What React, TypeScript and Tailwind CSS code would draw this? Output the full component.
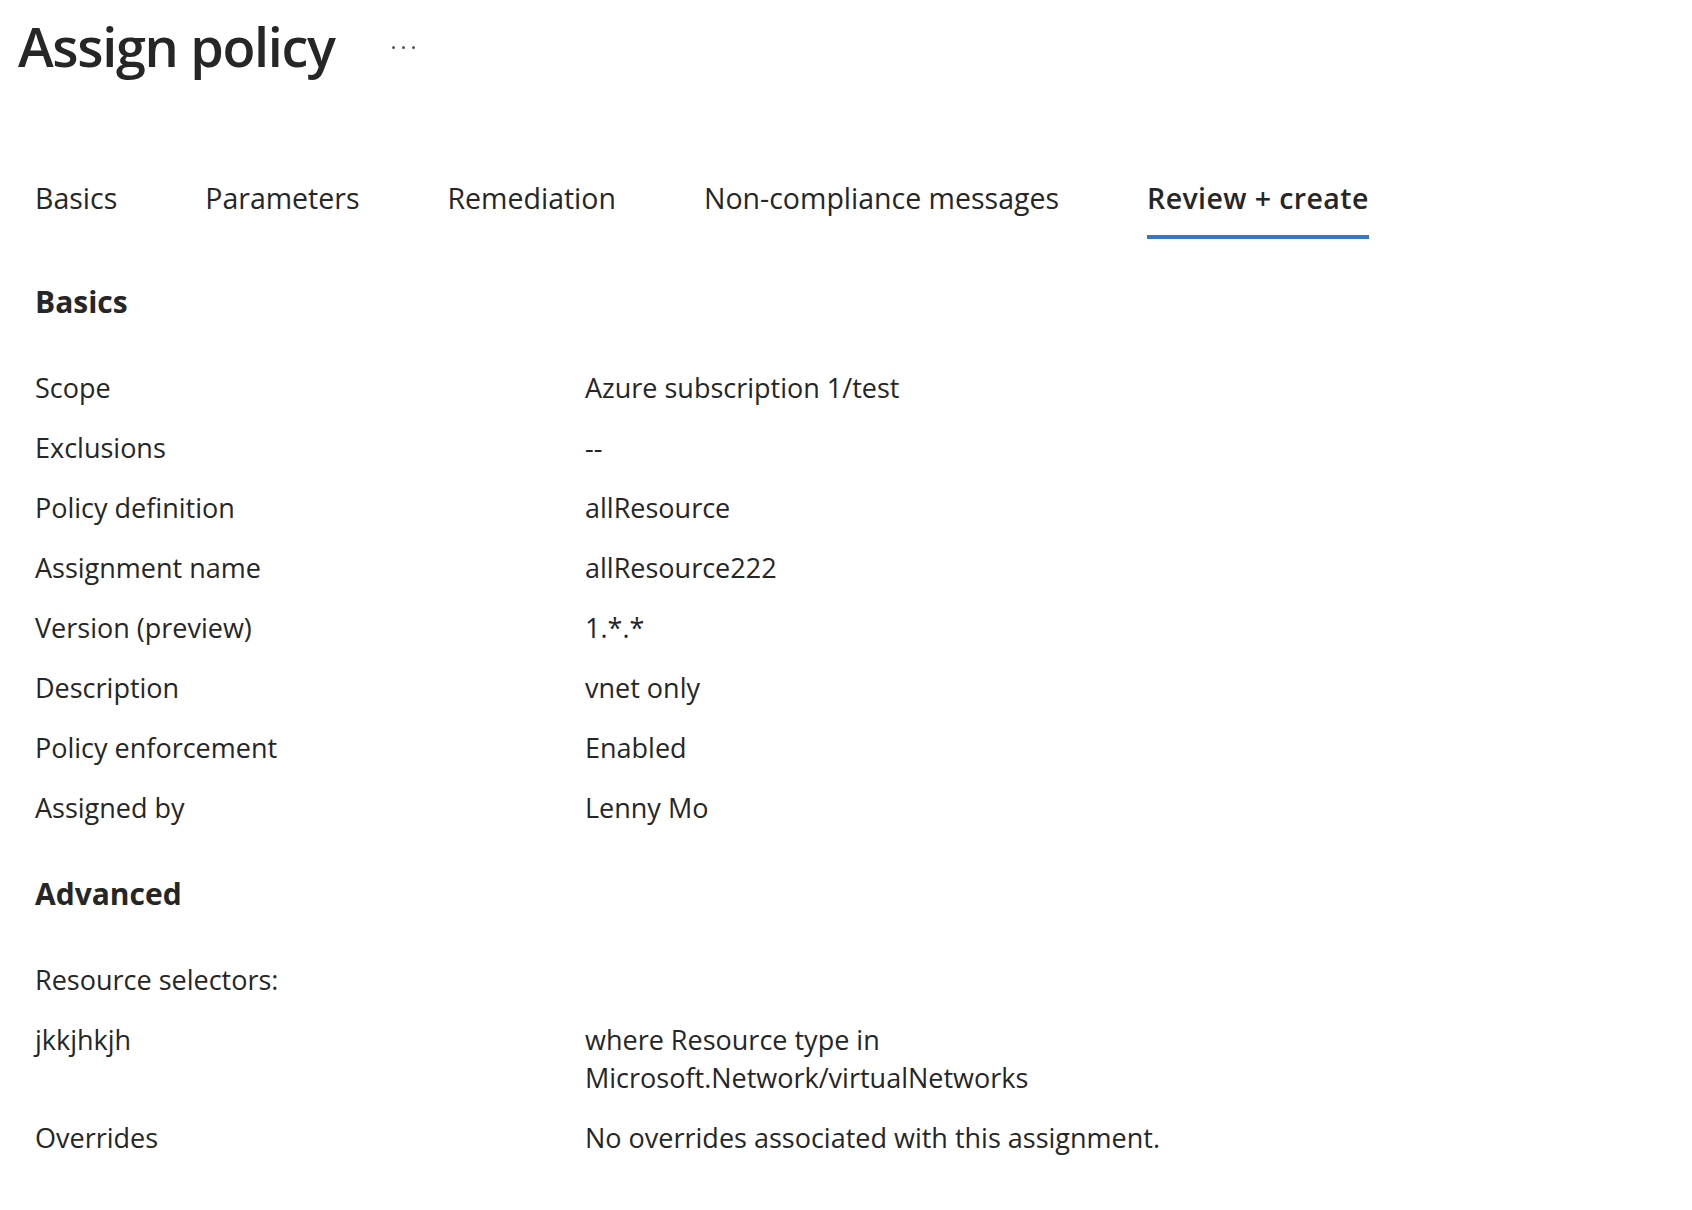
const tabs = ["Basics", "Parameters", "Remediation", "Non-compliance messages", "Review + create"];

type Row = { label: string; value?: string[] };

const basics: Row[] = [
  { label: "Scope", value: ["Azure subscription 1/test"] },
  { label: "Exclusions", value: ["--"] },
  { label: "Policy definition", value: ["allResource"] },
  { label: "Assignment name", value: ["allResource222"] },
  { label: "Version (preview)", value: ["1.*.*"] },
  { label: "Description", value: ["vnet only"] },
  { label: "Policy enforcement", value: ["Enabled"] },
  { label: "Assigned by", value: ["Lenny Mo"] },
];

const advanced: Row[] = [
  { label: "Resource selectors:" },
  { label: "jkkjhkjh", value: ["where Resource type in", "Microsoft.Network/virtualNetworks"] },
  { label: "Overrides", value: ["No overrides associated with this assignment."] },
];

const SummaryRow = ({ row }: { row: Row }) => (
  <div className="flex pb-[22px] text-[27px] leading-[38px]">
    <div className="w-[550px] shrink-0">{row.label}</div>
    {row.value && (
      <div className="flex flex-col">
        {row.value.map((line) => (
          <span key={line}>{line}</span>
        ))}
      </div>
    )}
  </div>
);

const Section = ({ title, rows }: { title: string; rows: Row[] }) => (
  <section className="flex flex-col">
    <h2 className="mb-[48px] text-[30px] leading-[38px] font-bold">{title}</h2>
    {rows.map((row) => (
      <SummaryRow key={row.label} row={row} />
    ))}
  </section>
);

export default function App() {
  return (
    <div
      className="min-h-screen bg-white text-[#262626]"
      style={{ fontFamily: '"Open Sans", "Noto Sans", sans-serif' }}
    >
      <header className="flex items-center gap-[58px] pl-[18px] pt-[13px]">
        <h1 className="text-[54px] leading-[66px] font-semibold tracking-tight">Assign policy</h1>
        <span className="flex gap-[7px] pt-[2px]">
          <span className="size-[3px] rounded-full bg-[#555]" />
          <span className="size-[3px] rounded-full bg-[#555]" />
          <span className="size-[3px] rounded-full bg-[#555]" />
        </span>
      </header>

      <nav className="mt-[99px] flex gap-[88px] pl-[35px]">
        {tabs.map((tab) => {
          const active = tab === "Review + create";
          return (
            <div
              key={tab}
              className={
                active
                  ? "border-b-4 border-[#3277d0] pb-[17px] text-[28.5px] leading-[40px] font-semibold tracking-[0.4px]"
                  : "pb-[21px] text-[28.5px] leading-[40px]"
              }
            >
              {tab}
            </div>
          );
        })}
      </nav>

      <main className="flex flex-col gap-[26px] pl-[35px] pt-[44px]">
        <Section title="Basics" rows={basics} />
        <Section title="Advanced" rows={advanced} />
      </main>
    </div>
  );
}
